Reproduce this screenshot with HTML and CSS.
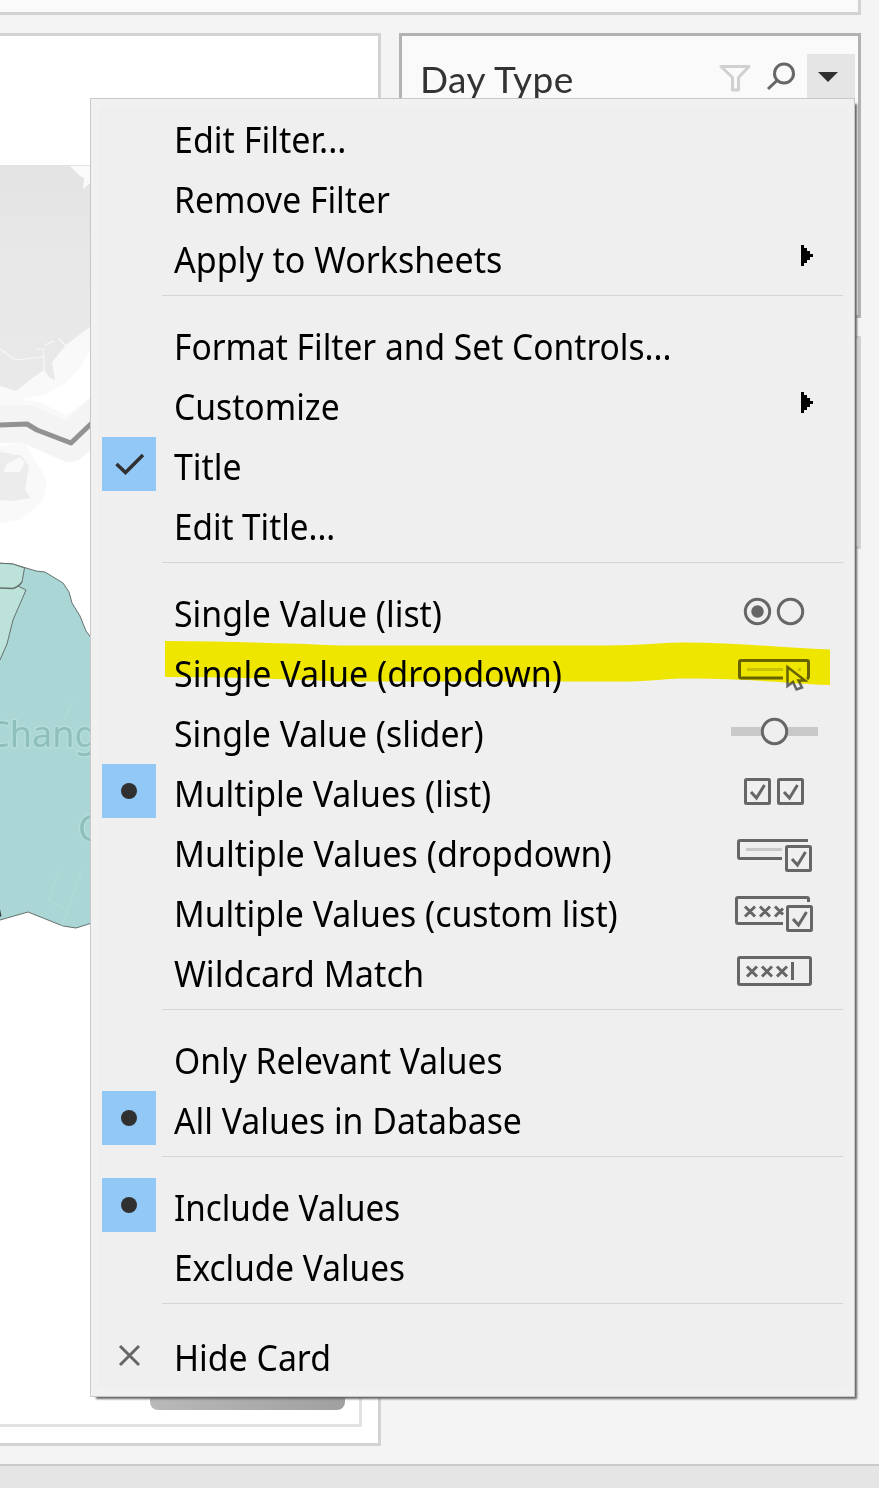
FILE: index.html
```html
<!DOCTYPE html>
<html lang="en">
<head>
<meta charset="utf-8">
<title>Day Type filter menu</title>
<link rel="stylesheet" href="styles.css">
</head>
<body>
<div class="app">
  <div class="shelf"></div>
  <div class="workspace">
    <section class="sheet">
      <svg class="map" width="378" height="1392" viewBox="0 36 378 1392">
        <defs><linearGradient id="bar"><stop offset="0" stop-color="#b9b9b9"/><stop offset="1" stop-color="#a0a0a0"/></linearGradient><linearGradient id="land" x2="0" y2="1"><stop offset="0" stop-color="#e3e3e3"/><stop offset=".35" stop-color="#e7e7e7"/><stop offset="1" stop-color="#e9e9e9"/></linearGradient></defs>
        <path fill="#f9f9f9" d="M0 165H100V430L69 442L30 424L0 424Z"/>
        <path fill="#fff" d="M95 342L80 368L66 383L45 395L20 399L40 402L66 415L95 396Z"/>
        <path fill="url(#land)" d="M0 165H95V323L66 345L52 362L55 380L50 378L44 370L31 379L16 391L0 386Z"/>
        <path fill="#fafafa" d="M70 166L80 176L84 178L83 189L95 179V166Z"/>
        <path fill="none" stroke="#f8f8f8" stroke-width="1.2" d="M0 349L15 360L44 357L43 349L36 349M44 357L44 372M45 345L54 341M59 339L66 346"/>
        <path fill="none" stroke="#f4f4f4" stroke-width="38" stroke-linejoin="round" d="M0 424H27L70 443L110 405"/>
        <path fill="#f9f9f9" d="M0 447L24 442L47 480L43 501L20 520L0 523Z"/>
        <path fill="#ececec" d="M0 452L8 453L14 455L21 455L29 466L25 490L31 498L12 501L0 500Z"/>
        <path fill="#f9f9f9" d="M3 472L7 464L20 457L25 462L20 472Z"/>
        <path fill="none" stroke="#929292" stroke-width="5" stroke-linejoin="round" d="M0 425L27 424L37 430L71 443L95 420"/>
        <path fill="#aad7d5" stroke="#65716f" d="M-3 563L13 564L36 571L45 572L63 583L69 592L72 603L80 616L86 631L95 643V922L76 928L63 926L28 912L0 920L-3 920Z"/>
        <path fill="#bce2d9" stroke="#65716f" d="M-3 563L13 564L24.500 568L22 582L18 586L26 590L13 620L7 644L0 660L-3 662Z"/>
        <path fill="none" stroke="#65716f" stroke-width="1.400" d="M0 588L13 588.500Q18 587 22 582"/>
        <path fill="none" stroke="#b4dddb" stroke-width="1.200" opacity=".6" d="M73 699L64 720M62 926L82 870M48 900L59 871M48 900L66 910"/>
        <path fill="#444" d="M0 909L1.500 916L0 917Z"/>
        <text class="place" x="-13" y="747">Changi</text>
        <text class="place" x="78" y="841">Ch</text>
        <path fill="none" stroke="#e2e2e2" stroke-width="3" d="M0 1425.500H360.500V1360"/>
        <rect x="150" y="1350" width="195" height="60" rx="8" fill="url(#bar)"/>
      </svg>
    </section>
    <aside class="cards">
      <section class="card card-active">
        <h2 class="card-title">Day Type</h2>
        <svg class="funnel" width="32" height="28" viewBox="0 0 32 28"><path d="M2 2.500H30L19.500 13.500V26H13.500V13.500Z"/></svg>
        <svg class="lens" width="30" height="30" viewBox="0 0 30 30"><circle cx="18" cy="11.500" r="9.500"/><path d="M11 18.500L2 27"/></svg>
        <span class="caret"><svg width="20" height="10" viewBox="0 0 20 10"><path fill="#303030" d="M0 0H20L10 10Z"/></svg></span>
      </section>
      <section class="card card-next"></section>
    </aside>
  </div>
  <footer class="tabs"></footer>

  <nav class="menu">
    <div class="row"><span class="label l1">Edit Filter...</span></div>
    <div class="row"><span class="label l2">Remove Filter</span></div>
    <div class="row"><span class="label l3">Apply to Worksheets</span><svg class="more" viewBox="0 0 12 21" shape-rendering="crispEdges"><path d="M0 0H3V3H6V6H9V9H12V12H9V15H6V18H3V21H0Z"/></svg></div>
    <div class="sep"></div>
    <div class="row"><span class="label l4">Format Filter and Set Controls...</span></div>
    <div class="row"><span class="label l5">Customize</span><svg class="more" viewBox="0 0 12 21" shape-rendering="crispEdges"><path d="M0 0H3V3H6V6H9V9H12V12H9V15H6V18H3V21H0Z"/></svg></div>
    <div class="row"><span class="mark on"><svg width="54" height="54"><path class="tick" d="M14.500 27L23.500 35.500L41 18"/></svg></span><span class="label l6">Title</span></div>
    <div class="row"><span class="label l7">Edit Title...</span></div>
    <div class="sep"></div>
    <div class="row"><span class="label l8">Single Value (list)</span><svg class="icon" viewBox="0 0 100 60"><circle cx="32.500" cy="30.500" r="12.200"/><circle cx="65.500" cy="30.500" r="12.200"/><circle class="solid" cx="32.500" cy="30.500" r="6.200"/></svg></div>
    <div class="row"><span class="label l9">Single Value (dropdown)</span><svg class="icon" viewBox="0 0 100 60"><path d="M58 37H16Q14.500 37 14.500 35.500V21Q14.500 19.500 16 19.500H82Q83.500 19.500 83.500 21V35.500Q83.500 37 82 38"/><path class="pale" d="M22 28.500H58M73 28.500H76"/><path stroke-width="2.500" d="M62.500 26V45L68 41L71.500 48.500L77 46.500L73.500 39.500H80Z"/></svg>
      <svg class="highlight" width="665" height="50" viewBox="165 638 665 50"><path fill="#fff600" d="M165 641Q270 642 340 645.500H600C650 645.500 655 642.500 685 642.500C735 642.500 785 648 830 649.500V685C780 683 750 678.500 685 678.500C665 678.500 660 681 625 681.500H340Q250 677 165 677Z"/></svg></div>
    <div class="row"><span class="label l10">Single Value (slider)</span><svg class="icon" viewBox="0 0 100 60"><path stroke="#c9c9c9" stroke-width="9" d="M6 30.500H93"/><circle cx="49.500" cy="30.500" r="12.200" fill="#efefef"/></svg></div>
    <div class="row"><span class="mark on"><svg width="54" height="54"><circle cx="27" cy="27" r="8" fill="#303030"/></svg></span><span class="label l11">Multiple Values (list)</span><svg class="icon" viewBox="0 0 100 60"><rect x="20.500" y="18.500" width="24" height="24" rx="1"/><rect x="53.500" y="18.500" width="24" height="24" rx="1"/><path d="M26 31L31.500 37L39.500 24M59 31L64.500 37L72.500 24"/></svg></div>
    <div class="row"><span class="label l12">Multiple Values (dropdown)</span><svg class="icon" viewBox="0 0 100 60"><path d="M57 37.500H15Q13.500 37.500 13.500 36V21Q13.500 19.500 15 19.500H83"/><path class="pale" d="M21 28.500H57"/><rect x="61.500" y="25.500" width="24" height="24" rx="1"/><path d="M67 38L72.500 44L80.500 31"/></svg></div>
    <div class="row"><span class="label l13">Multiple Values (custom list)</span><svg class="icon" viewBox="0 0 100 60"><path d="M58 42.500H13Q11.500 42.500 11.500 41V18Q11.500 16.500 13 16.500H82Q83.500 16.500 83.500 18V21"/><path d="M20 25.500L30 35.500M30 25.500L20 35.500M35 25.500L45 35.500M45 25.500L35 35.500M50 25.500L58 33.500M58 27.500L50 35.500"/><rect x="62.500" y="25.500" width="24" height="24" rx="1"/><path d="M68 38L73.500 44L81.500 31"/></svg></div>
    <div class="row"><span class="label l14">Wildcard Match</span><svg class="icon" viewBox="0 0 100 60"><rect x="13.500" y="16.500" width="72" height="27" rx="1.500"/><path d="M22 25.500L32 35.500M32 25.500L22 35.500M37 25.500L47 35.500M47 25.500L37 35.500M52 25.500L62 35.500M62 25.500L52 35.500M67.500 21V39"/></svg></div>
    <div class="sep"></div>
    <div class="row"><span class="label l15">Only Relevant Values</span></div>
    <div class="row"><span class="mark on"><svg width="54" height="54"><circle cx="27" cy="27" r="8" fill="#303030"/></svg></span><span class="label l16">All Values in Database</span></div>
    <div class="sep"></div>
    <div class="row"><span class="mark on"><svg width="54" height="54"><circle cx="27" cy="27" r="8" fill="#303030"/></svg></span><span class="label l17">Include Values</span></div>
    <div class="row"><span class="label l18">Exclude Values</span></div>
    <div class="sep"></div>
    <div class="row last"><span class="mark"><svg width="54" height="54"><path class="cross" d="M18 18L37 37M37 18L18 37"/></svg></span><span class="label l19">Hide Card</span></div>
  </nav>
</div>
</body>
</html>
```
FILE: styles.css
```css
* { box-sizing: border-box; }
body { margin: 0; }
.app {
  position: relative;
  display: flex;
  flex-direction: column;
  width: 879px;
  height: 1488px;
  overflow: hidden;
  background: #f4f4f4;
}
.shelf {
  width: 861px;
  height: 15px;
  background: #fafafa;
  border: solid #d3d3d3;
  border-width: 0 3px 3px 0;
}
.workspace {
  display: flex;
  gap: 18px;
  height: 1449px;
  padding-top: 18px;
}
.sheet {
  width: 381px;
  height: 1413px;
  background: #fff;
  border: solid #d3d3d3;
  border-width: 3px 3px 3px 0;
}
.map { display: block; }
.place {
  font: 36px "Noto Sans", sans-serif;
  fill: #8fbfbd;
  stroke: #b4dcda;
  stroke-width: 3px;
  paint-order: stroke;
}
.cards { display: flex; flex-direction: column; gap: 18px; width: 462px; }
.card { background: #fafafa; border: 3px solid #d3d3d3; }
.card-active {
  display: flex;
  align-items: flex-start;
  height: 285px;
  padding: 18px 3px 0 18px;
  border-color: #b2b2b2;
}
.card-next { height: 213px; }
.card-title {
  flex: 1;
  margin: 0;
  font: 400 37px/50px Lato, sans-serif;
  letter-spacing: .45px;
  color: #333;
}
.funnel { margin: 10px 15px 0 0; fill: none; stroke: #d0d0d0; stroke-width: 3; stroke-linejoin: round; }
.lens { margin: 8px 11px 0 0; fill: none; stroke: #666; stroke-width: 3; }
.caret {
  display: flex;
  justify-content: center;
  width: 48px;
  height: 60px;
  padding: 18px 6px 0 0;
  background: #e5e5e5;
}
.tabs { height: 24px; background: #e5e5e5; border-top: 2px solid #cacaca; }

.menu {
  position: absolute;
  left: 90px;
  top: 98px;
  width: 765px;
  height: 1299px;
  padding: 8px 11px;
  background: #efefef;
  border: 1px solid #c8c8c8;
  box-shadow: inset 0 0 0 7px #f1f1f1, 4px 4px 2px -2px #666;
}
.row {
  position: relative;
  display: flex;
  align-items: center;
  height: 60px;
  padding-right: 19px;
}
.last { margin-top: 3px; }
.sep { height: 27px; margin-left: 60px; padding-top: 8px; }
.sep::before { content: ""; display: block; height: 1px; background: #d5d5d5; }
.mark { width: 54px; height: 54px; margin-right: -54px; }
.mark svg { display: block; }
.on { background: #91c8f6; }
.label {
  flex: 1;
  padding: 6px 0 0 72px;
  font: 36px/60px "Noto Sans", sans-serif;
  white-space: nowrap;
  color: #000;
  transform: scaleX(.94);
  transform-origin: 72px 50%;
}
.l1 { transform: scaleX(.945); }
.l2 { transform: scaleX(.935); }
.l3 { transform: scaleX(.945); }
.l4 { transform: scaleX(.932); }
.l5 { transform: scaleX(.935); }
.l7 { transform: scaleX(.923); }
.l9, .l12 { transform: scaleX(.946); }
.l14 { transform: scaleX(.952); }
.l15 { transform: scaleX(.933); }
.l16 { transform: scaleX(.938); }
.l17 { transform: scaleX(.922); }
.l18 { transform: scaleX(.927); }
.tick { fill: none; stroke: #303030; stroke-width: 3.5; }
.cross { fill: none; stroke: #666; stroke-width: 3; }
.more { width: 12px; height: 21px; margin: 0 11px 3px 0; fill: #000; }
.icon {
  width: 100px;
  height: 60px;
  margin-right: -1px;
  fill: none;
  stroke: #666;
  stroke-width: 3;
}
.solid { fill: #666; stroke: none; }
.pale { stroke: #c9c9c9; }
.highlight { position: absolute; left: 63px; top: -3px; mix-blend-mode: multiply; }
```
